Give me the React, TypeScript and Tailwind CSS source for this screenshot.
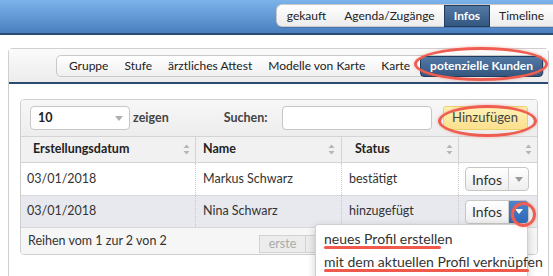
import React from "react";

const FONT = { fontFamily: 'Lato, "Open Sans", sans-serif' };

function SortIcon() {
  return (
    <svg width="7" height="11" viewBox="0 0 7 11" className="shrink-0">
      <path d="M3.5 0.5 L6.5 4 L0.5 4 Z" fill="#b5b5b5" />
      <path d="M3.5 10.5 L6.5 7 L0.5 7 Z" fill="#b5b5b5" />
    </svg>
  );
}

function Caret({ color = "#9a9a9a" }: { color?: string }) {
  return (
    <svg width="8" height="5" viewBox="0 0 8 5">
      <path d="M0 0 L8 0 L4 5 Z" fill={color} />
    </svg>
  );
}

const TOP_TABS = ["gekauft", "Agenda/Zugänge", "Infos", "Timeline"];
const SUB_TABS = ["Gruppe", "Stufe", "ärztliches Attest", "Modelle von Karte", "Karte", "potenzielle Kunden"];

const ROWS = [
  { date: "03/01/2018", name: "Markus Schwarz", status: "bestätigt", open: false, bg: "bg-white" },
  { date: "03/01/2018", name: "Nina Schwarz", status: "hinzugefügt", open: true, bg: "bg-[#e8e9ee]" },
];

export default function App() {
  return (
    <div
      className="relative h-[276px] w-[553px] overflow-hidden whitespace-nowrap bg-white text-[12.5px] text-[#333]"
      style={FONT}
    >
      {/* Top bar */}
      <div className="flex h-[35px] justify-end border-b-2 border-[#2d4b72] bg-linear-to-b from-[#7cb3ea] to-[#4b80c0] pt-[4px]">
        <div className="ml-auto flex h-[23px] items-center rounded-l-[6px] border border-r-0 border-[#c9c9c9] bg-linear-to-b from-white to-[#ececec] pl-[1px] text-[12px] shadow-[0_1px_1px_rgba(0,0,0,0.15)]">
          {TOP_TABS.map((tab) =>
            tab === "Infos" ? (
              <span
                key={tab}
                className="flex h-[22px] items-center border border-[#1f3b5e] bg-linear-to-b from-[#5379a6] to-[#34577f] px-[9px] font-bold text-white"
              >
                {tab}
              </span>
            ) : (
              <span key={tab} className="px-[9px] text-[#222]">
                {tab}
              </span>
            ),
          )}
        </div>
      </div>

      {/* Outer panel */}
      <div className="pl-[8px] pr-[4px] pt-[13px]">
        <div className="h-[240px] rounded-[4px] border border-[#cfcfcf]">
          <div className="flex h-[35px] items-center justify-end border-b-2 border-[#2d4b72] bg-linear-to-b from-[#fbfbfb] to-[#ececec] pr-[4px] pt-[1px]">
            <div className="flex h-[22px] items-center rounded-[5px] border border-[#c9c9c9] bg-linear-to-b from-white to-[#f0f0f0] pl-[4px] text-[12px]">
              {SUB_TABS.map((tab) =>
                tab === "potenzielle Kunden" ? (
                  <span
                    key={tab}
                    className="ml-[2px] flex h-[21px] items-center rounded-[4px] border border-[#1f3b5e] bg-linear-to-b from-[#5379a6] to-[#34577f] px-[9px] font-bold text-white"
                  >
                    {tab}
                  </span>
                ) : (
                  <span key={tab} className="px-[8px] text-[#222]">
                    {tab}
                  </span>
                ),
              )}
            </div>
          </div>

          {/* Table panel */}
          <div className="pb-[20px] pl-[11px] pr-[10px] pt-[15px]">
            <div className="overflow-hidden rounded-[4px] border border-[#cfcfcf]">
              {/* Toolbar */}
              <div className="flex h-[37px] items-center border-b border-[#d4d4d4] bg-linear-to-b from-[#f7f7f7] to-[#ededed] pl-[9px]">
                <div className="flex h-[24px] w-[100px] items-center justify-between rounded-[4px] border border-[#c6c6c6] bg-white pl-[7px] pr-[6px] font-bold text-[#222]">
                  10
                  <Caret color="#b0b0b0" />
                </div>
                <span className="ml-[3px] font-bold text-[#444]">zeigen</span>
                <span className="ml-[55px] font-bold text-[#444]">Suchen:</span>
                <div className="ml-[14px] h-[24px] w-[150px] rounded-[4px] border border-[#c6c6c6] bg-white" />
                <button
                  type="button"
                  className="ml-[11px] h-[24px] w-[85px] rounded-[3px] border border-[#ecd26a] bg-linear-to-b from-[#fff1b5] to-[#fbe08d] text-[13px] text-[#444]"
                >
                  Hinzufügen
                </button>
              </div>

              {/* Header */}
              <div className="grid h-[26px] grid-cols-[175px_146px_117px_1fr] border-b border-[#d4d4d4] bg-[#f1f1f1] font-bold text-[#222]">
                <div className="flex items-center justify-between border-r border-[#d4d4d4] pl-[12px] pr-[5px]">
                  Erstellungsdatum
                  <SortIcon />
                </div>
                <div className="flex items-center justify-between border-r border-[#d4d4d4] pl-[7px] pr-[6px]">
                  Name
                  <SortIcon />
                </div>
                <div className="flex items-center justify-between border-r border-[#d4d4d4] pl-[13px] pr-[5px]">
                  Status
                  <SortIcon />
                </div>
                <div className="flex items-center justify-end pr-[5px]">
                  <SortIcon />
                </div>
              </div>

              {/* Rows */}
              {ROWS.map((row, i) => (
                <div
                  key={row.name}
                  className={`grid grid-cols-[175px_146px_117px_1fr] border-b border-[#d8d8d8] ${row.bg} ${
                    i === 0 ? "h-[33px]" : "h-[32px]"
                  }`}
                >
                  <div className="flex items-center border-r border-dotted border-[#c8c8c8] pl-[6px]">{row.date}</div>
                  <div className="flex items-center border-r border-dotted border-[#c8c8c8] pl-[7px]">{row.name}</div>
                  <div className="flex items-center border-r border-dotted border-[#c8c8c8] pl-[7px]">{row.status}</div>
                  <div className="flex items-center pl-[6px]">
                    <div className="flex h-[24px] w-[64px] overflow-hidden rounded-[4px] border border-[#c6c6c6] bg-linear-to-b from-white to-[#eeeeee] text-[14px] text-[#333]">
                      <span className="flex w-[43px] items-center justify-center border-r border-[#cfcfcf]">Infos</span>
                      {row.open ? (
                        <span className="flex flex-1 items-center justify-center bg-linear-to-b from-[#4a86d0] to-[#2f68b4]">
                          <Caret color="#ffffff" />
                        </span>
                      ) : (
                        <span className="flex flex-1 items-center justify-center">
                          <Caret />
                        </span>
                      )}
                    </div>
                  </div>
                </div>
              ))}

              {/* Footer */}
              <div className="flex h-[26px] items-center bg-[#f6f6f6] pl-[7px]">
                <span className="w-[231px]">Reihen vom 1 zur 2 von 2</span>
                <div className="mt-[7px] flex self-start">
                  <span className="flex h-[18px] w-[47px] items-center justify-center border border-[#d2d2d2] bg-[#ececec] text-[#aaa]">
                    erste
                  </span>
                  <span className="h-[18px] w-[50px] border border-l-0 border-[#d2d2d2] bg-[#ececec]" />
                </div>
              </div>
            </div>
          </div>
        </div>
      </div>

      {/* Dropdown menu */}
      <div className="absolute left-[315px] top-[224px] w-[213px] rounded-[3px] border border-[#cfcfcf] bg-white pb-[6px] pt-[2px] text-[14px] text-[#333] shadow-[0_3px_8px_rgba(0,0,0,0.2)]">
        <div className="relative px-[8px] leading-[23px]">
          neues Profil erstellen
          <span className="absolute left-[8px] top-[19px] h-[3px] w-[117px] rounded-full bg-[#ef5a4c]" />
        </div>
        <div className="relative px-[8px] leading-[23px]">
          mit dem aktuellen Profil verknüpfen
          <span className="absolute left-[8px] top-[19px] h-[3px] w-[205px] rounded-full bg-[#ef5a4c]" />
        </div>
      </div>

      {/* Red annotation marks */}
      <div className="pointer-events-none absolute left-[414px] top-[47px] h-[34px] w-[134px] rounded-[50%] border-[3px] border-[#ee5d4f] shadow-[0_0_3px_rgba(238,93,79,0.5)]" />
      <div className="pointer-events-none absolute left-[438px] top-[105px] h-[32px] w-[99px] rounded-[50%] border-[3px] border-[#ee5d4f] shadow-[0_0_3px_rgba(238,93,79,0.5)]" />
      <div className="pointer-events-none absolute left-[511px] top-[202px] h-[25px] w-[25px] rounded-full border-[3px] border-[#ee5d4f] shadow-[0_0_3px_rgba(238,93,79,0.5)]" />
    </div>
  );
}
